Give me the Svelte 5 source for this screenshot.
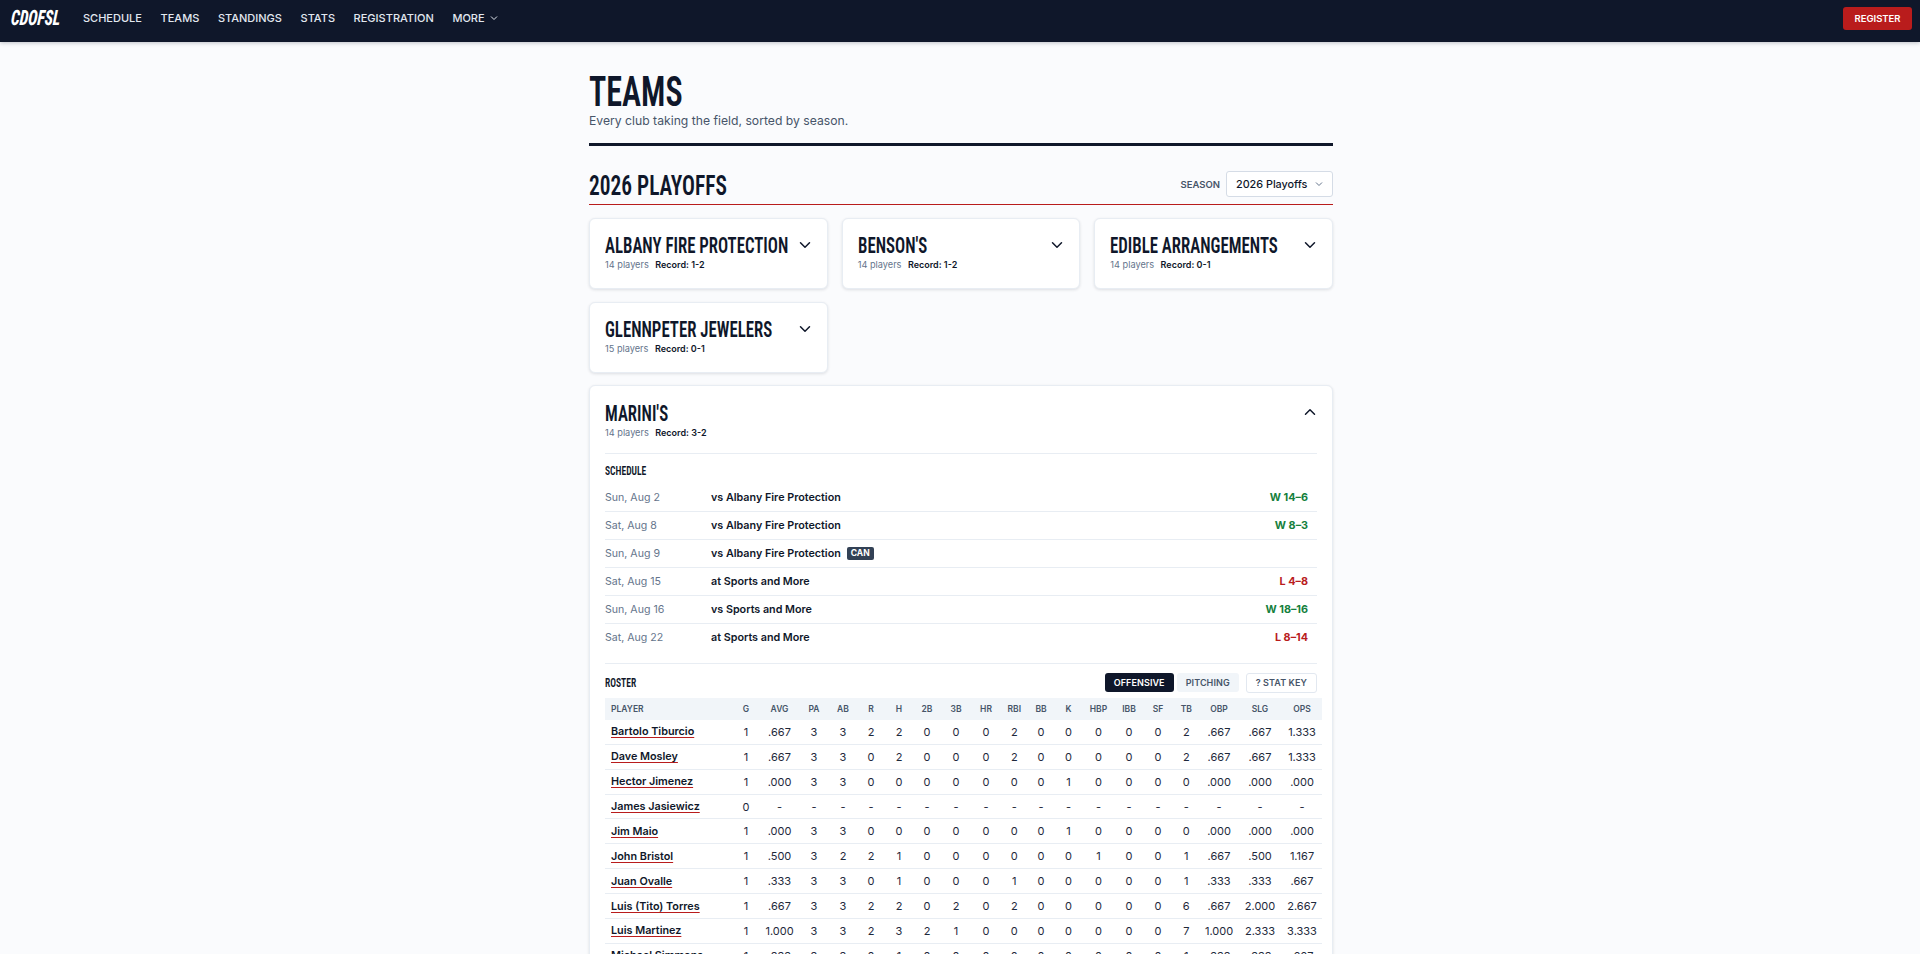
<script>
  const navLinks = ['Schedule', 'Teams', 'Standings', 'Stats', 'Registration'];

  const collapsed = [
    { name: 'Albany Fire Protection', players: 14, record: '1-2' },
    { name: "Benson's", players: 14, record: '1-2' },
    { name: 'Edible Arrangements', players: 14, record: '0-1' },
    { name: 'GlennPeter Jewelers', players: 15, record: '0-1' },
  ];

  const schedule = [
    { date: 'Sun, Aug 2', opp: 'vs Albany Fire Protection', result: 'W 14–6', win: true },
    { date: 'Sat, Aug 8', opp: 'vs Albany Fire Protection', result: 'W 8–3', win: true },
    { date: 'Sun, Aug 9', opp: 'vs Albany Fire Protection', result: '', can: true },
    { date: 'Sat, Aug 15', opp: 'at Sports and More', result: 'L 4–8' },
    { date: 'Sun, Aug 16', opp: 'vs Sports and More', result: 'W 18–16', win: true },
    { date: 'Sat, Aug 22', opp: 'at Sports and More', result: 'L 8–14' },
  ];

  const columns = [
    ['G', 28], ['AVG', 39], ['PA', 30], ['AB', 28], ['R', 28], ['H', 28], ['2B', 28], ['3B', 30], ['HR', 30],
    ['RBI', 26.5], ['BB', 27], ['K', 28], ['HBP', 32], ['IBB', 29], ['SF', 29], ['TB', 27.5], ['OBP', 38], ['SLG', 44], ['OPS', 40],
  ];

  const roster = [
    ['Bartolo Tiburcio', 1, '.667', 3, 3, 2, 2, 0, 0, 0, 2, 0, 0, 0, 0, 0, 2, '.667', '.667', '1.333'],
    ['Dave Mosley', 1, '.667', 3, 3, 0, 2, 0, 0, 0, 2, 0, 0, 0, 0, 0, 2, '.667', '.667', '1.333'],
    ['Hector Jimenez', 1, '.000', 3, 3, 0, 0, 0, 0, 0, 0, 0, 1, 0, 0, 0, 0, '.000', '.000', '.000'],
    ['James Jasiewicz', 0, '-', '-', '-', '-', '-', '-', '-', '-', '-', '-', '-', '-', '-', '-', '-', '-', '-', '-'],
    ['Jim Maio', 1, '.000', 3, 3, 0, 0, 0, 0, 0, 0, 0, 1, 0, 0, 0, 0, '.000', '.000', '.000'],
    ['John Bristol', 1, '.500', 3, 2, 2, 1, 0, 0, 0, 0, 0, 0, 1, 0, 0, 1, '.667', '.500', '1.167'],
    ['Juan Ovalle', 1, '.333', 3, 3, 0, 1, 0, 0, 0, 1, 0, 0, 0, 0, 0, 1, '.333', '.333', '.667'],
    ['Luis (Tito) Torres', 1, '.667', 3, 3, 2, 2, 0, 2, 0, 2, 0, 0, 0, 0, 0, 6, '.667', '2.000', '2.667'],
    ['Luis Martinez', 1, '1.000', 3, 3, 2, 3, 2, 1, 0, 0, 0, 0, 0, 0, 0, 7, '1.000', '2.333', '3.333'],
    ['Michael Simmons', 1, '.333', 3, 3, 0, 1, 0, 0, 0, 0, 0, 0, 0, 0, 0, 1, '.333', '.333', '.667'],
  ];
</script>

{#snippet chevron(up)}
  <svg class="chev" viewBox="0 0 24 24" width="18" height="18" fill="none" stroke="currentColor" stroke-width="2" stroke-linecap="round" stroke-linejoin="round">
    <path d={up ? 'M6 15l6-6 6 6' : 'M6 9l6 6 6-6'} />
  </svg>
{/snippet}

{#snippet teamHead(team)}
  <div class="team-info">
    <h3>{team.name}</h3>
    <div class="meta"><span>{team.players} players</span><strong>Record: {team.record}</strong></div>
  </div>
{/snippet}

<div class="page">
  <header>
    <span class="logo">CDOFSL</span>
    <nav>
      {#each navLinks as link}
        <span>{link}</span>
      {/each}
      <span class="more">More
        <svg viewBox="0 0 24 24" width="12" height="12" fill="none" stroke="currentColor" stroke-width="2"><path d="M6 9l6 6 6-6" /></svg>
      </span>
    </nav>
    <button class="register">Register</button>
  </header>

  <main>
    <h1>Teams</h1>
    <p class="sub">Every club taking the field, sorted by season.</p>
    <hr class="rule" />

    <div class="season-bar">
      <h2>2026 Playoffs</h2>
      <div class="season">
        <span class="season-label">Season</span>
        <div class="select">2026 Playoffs
          <svg viewBox="0 0 24 24" width="12" height="12" fill="none" stroke="#64748b" stroke-width="2"><path d="M6 9l6 6 6-6" /></svg>
        </div>
      </div>
    </div>

    <div class="grid">
      {#each collapsed as team}
        <div class="card">
          {@render teamHead(team)}
          {@render chevron(false)}
        </div>
      {/each}
    </div>

    <section class="open">
      <div class="open-head">
        {@render teamHead({ name: "Marini's", players: 14, record: '3-2' })}
        {@render chevron(true)}
      </div>

      <div class="panel schedule">
        <h4>Schedule</h4>
        {#each schedule as game}
          <div class="game">
            <span class="date">{game.date}</span>
            <span class="opp">{game.opp}</span>
            {#if game.can}<span class="badge">CAN</span>{/if}
            <span class="result" class:win={game.win}>{game.result}</span>
          </div>
        {/each}
      </div>

      <div class="panel roster">
        <div class="roster-head">
          <h4>Roster</h4>
          <div class="tabs">
            <button class="tab active">Offensive</button>
            <button class="tab">Pitching</button>
            <button class="tab key">? Stat Key</button>
          </div>
        </div>
        <table>
          <colgroup>
            <col width="127" />
            {#each columns as col}<col width={col[1]} />{/each}
          </colgroup>
          <thead>
            <tr>
              <th class="name">Player</th>
              {#each columns as col}<th>{col[0]}</th>{/each}
            </tr>
          </thead>
          <tbody>
            {#each roster as row}
              <tr>
                <td class="name"><span>{row[0]}</span></td>
                {#each row.slice(1) as val}<td>{val}</td>{/each}
              </tr>
            {/each}
          </tbody>
        </table>
      </div>
    </section>
  </main>
</div>

<style>
  :global(body) {
    background: #fafbfd;
    color: #0f172a;
    font-family: Inter, 'Liberation Sans', sans-serif;
    overflow: hidden;
  }

  .page {
    height: 954px;
    overflow: hidden;
  }

  header {
    box-sizing: border-box;
    height: 42px;
    background: #0f172a;
    display: flex;
    align-items: center;
    padding: 0 8px 6px 11px;
    box-shadow: 0 1px 4px rgba(15, 23, 42, 0.25);
    position: relative;
  }

  .logo {
    font-family: Roboto, 'Liberation Sans', sans-serif;
    font-stretch: 75%;
    font-weight: 800;
    font-style: italic;
    font-size: 21px;
    color: #fff;
    width: 72px;
    flex: none;
    transform: scaleX(0.75) skewX(-6deg);
    transform-origin: left center;
  }

  nav {
    display: flex;
    gap: 18.6px;
    font-size: 11px;
    font-weight: 500;
    text-transform: uppercase;
    color: #e2e8f0;
    flex: 1;
  }

  .more {
    display: flex;
    align-items: center;
    gap: 3px;
  }

  .register {
    background: #b91c1c;
    color: #fff;
    border: 0;
    border-radius: 3px;
    height: 23px;
    width: 69px;
    font: 600 9.5px Inter, sans-serif;
    text-transform: uppercase;
    margin-top: 1px;
  }

  main {
    width: 744px;
    margin-left: 589px;
    padding-top: 30px;
  }

  h1, h2, h3, h4 {
    font-family: Roboto, 'Liberation Sans', sans-serif;
    font-stretch: 75%;
    font-weight: 600;
    text-transform: uppercase;
    white-space: nowrap;
    margin: 0;
    transform: scaleX(0.765);
    transform-origin: left center;
  }

  h1 {
    font-size: 42px;
    line-height: 40px;
  }

  .sub {
    margin: 1px 0 0;
    font-size: 12.2px;
    line-height: 16px;
    color: #475569;
  }

  .rule {
    border: 0;
    height: 3px;
    background: #0f172a;
    margin: 14px 0 0;
  }

  .season-bar {
    display: flex;
    justify-content: space-between;
    align-items: center;
    height: 59px;
    padding-top: 18px;
    border-bottom: 1px solid #b91c1c;
    box-sizing: border-box;
  }

  h2 {
    font-size: 28px;
    margin-top: 2px;
  }

  .season {
    display: flex;
    align-items: center;
    gap: 6px;
    flex: none;
  }

  .season-label {
    font-size: 9.5px;
    font-weight: 600;
    text-transform: uppercase;
    color: #475569;
  }

  .select {
    box-sizing: border-box;
    width: 107px;
    height: 26px;
    background: #fff;
    border: 1px solid #d5dce6;
    border-radius: 3px;
    display: flex;
    align-items: center;
    justify-content: space-between;
    padding: 0 7px 0 9px;
    font-size: 10.8px;
    font-weight: 500;
    white-space: nowrap;
  }

  .grid {
    display: grid;
    grid-template-columns: repeat(3, minmax(0, 1fr));
    gap: 12.8px 14px;
    margin-top: 13px;
  }

  .card, .open {
    background: #fff;
    border: 1px solid #e8edf3;
    border-radius: 6px;
    box-shadow: 0 1px 3px rgba(15, 23, 42, 0.12);
  }

  .card {
    box-sizing: border-box;
    height: 71px;
    padding: 15px 13px 15px 15px;
    display: flex;
    justify-content: space-between;
    align-items: flex-start;
  }

  .team-info {
    flex: 1;
    min-width: 0;
  }

  .chev {
    flex: none;
    color: #0f172a;
    margin-top: 2px;
  }

  h3 {
    font-size: 22px;
    line-height: 24px;
  }

  .meta {
    display: flex;
    gap: 6.5px;
    font-size: 9.2px;
    line-height: 14px;
    color: #64748b;
  }

  .meta strong {
    color: #0f172a;
    font-weight: 600;
    font-size: 9px;
  }

  .open {
    margin-top: 12.2px;
    padding: 15px;
    box-sizing: border-box;
  }

  .open-head {
    display: flex;
    justify-content: space-between;
    align-items: flex-start;
    padding: 1px 0 13px;
  }

  .open-head .chev {
    margin-right: -2px;
    margin-top: 1px;
  }

  .panel {
    border-top: 1px solid #e8edf3;
  }

  h4 {
    font-size: 12.5px;
    line-height: 16px;
  }

  .schedule {
    padding: 9px 0 11px;
  }

  .schedule h4 {
    margin-bottom: 5px;
  }

  .game {
    height: 28px;
    box-sizing: border-box;
    display: flex;
    align-items: center;
    font-size: 10.75px;
    border-bottom: 1px solid #e8edf3;
    padding-right: 9px;
  }

  .game:last-child {
    border-bottom: 0;
  }

  .date {
    width: 106px;
    font-size: 10.6px;
    color: #64748b;
  }

  .opp {
    font-weight: 600;
  }

  .badge {
    background: #334155;
    color: #fff;
    font-size: 8.5px;
    font-weight: 700;
    line-height: 13px;
    border-radius: 2px;
    padding: 0 4px;
    margin-left: 6px;
  }

  .result {
    margin-left: auto;
    font-weight: 700;
    font-size: 10.8px;
    color: #b91c1c;
  }

  .result.win {
    color: #15803d;
  }

  .roster {
    padding-top: 9px;
  }

  .roster-head {
    display: flex;
    justify-content: space-between;
    align-items: center;
    height: 20px;
  }

  .tabs {
    display: flex;
    gap: 3px;
  }

  .tab {
    font: 600 9px Inter, sans-serif;
    letter-spacing: 0.01em;
    text-transform: uppercase;
    height: 19px;
    padding: 0 9px;
    border: 0;
    border-radius: 3px;
    background: #f1f5f9;
    color: #475569;
  }

  .tab.active {
    background: #0f172a;
    color: #fff;
  }

  .tab.key {
    background: #fff;
    border: 1px solid #e2e8f0;
    margin-left: 4px;
    height: 20px;
  }

  table {
    table-layout: fixed;
    width: 717px;
    border-collapse: separate;
    border-spacing: 0;
    margin-top: 5px;
    font-size: 11px;
  }

  th {
    background: #f1f5f9;
    height: 22px;
    font-size: 8.5px;
    font-weight: 600;
    color: #475569;
    padding: 0;
    text-align: center;
  }

  td {
    height: 24.875px;
    padding: 0;
    text-align: center;
    color: #1e293b;
    border-bottom: 1px solid #e8edf3;
    box-sizing: border-box;
  }

  th.name, td.name {
    text-align: left;
    padding-left: 6px;
  }

  th.name {
    text-transform: uppercase;
  }

  td.name {
    font-size: 10.8px;
    font-weight: 600;
    color: #0f172a;
  }

  td.name span {
    text-decoration: underline #b91c1c 1px;
    text-underline-offset: 2px;
    text-decoration-skip-ink: none;
  }
</style>
